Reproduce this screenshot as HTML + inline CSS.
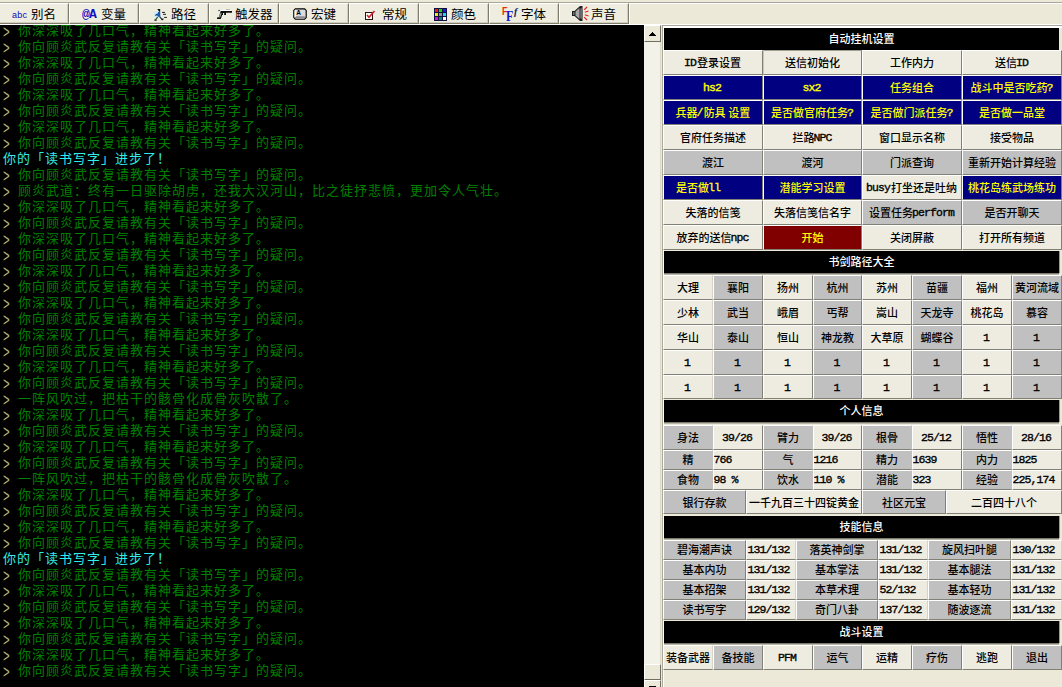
<!DOCTYPE html><html lang="zh"><head><meta charset="utf-8"><title>MUD</title><style>
*{box-sizing:border-box;margin:0;padding:0}
html,body{width:1062px;height:687px;overflow:hidden;background:#ECE9D8}
body{position:relative;font-family:"Liberation Sans","Noto Sans CJK SC",sans-serif}
.abs{position:absolute}
#tb{position:absolute;left:0;top:2px;width:1062px;height:23px;background:#ECE9D8;border-top:1px solid #A9A697;border-bottom:1px solid #fff}
#tb:before{content:"";position:absolute;left:0;top:0;width:1062px;height:1px;background:#fff}
.tbtn{position:absolute;top:0;height:21px;width:70px;background:#EFEDE0;border-top:1px solid #fff;border-left:1px solid #fff;border-right:1px solid #7F7C6B;border-bottom:1px solid #7F7C6B;box-shadow:1px 0 0 #fff, inset -1px -1px 0 #D2CFBF;font-size:12.5px;line-height:19px;color:#000;white-space:nowrap}
.tbtn .lbl{position:absolute;top:1.5px;font-family:"Liberation Sans","Noto Sans CJK SC",sans-serif;font-weight:400;letter-spacing:0}
.tbtn svg{position:absolute}
#term{position:absolute;left:0;top:25px;width:644px;height:662px;background:#000;overflow:hidden;font-family:"Liberation Mono","Noto Sans CJK SC",monospace;font-size:13px;letter-spacing:1px;font-weight:400;line-height:16px;color:#008000;white-space:pre}
#term .l{position:absolute;left:4px;height:16px;white-space:pre}
#term .l.c{left:3px}
#term .p{display:inline-block;width:14px;height:16px;color:#C0C080;font-size:14px;letter-spacing:0;font-weight:400;line-height:16px;vertical-align:top;transform:translate(-1px,1px) scale(.8,1.35);transform-origin:0 50%}
#term .c{color:#30ECEC}
#sb{position:absolute;left:644px;top:25px;width:17px;height:662px;background:#F3F2E9;border-right:1px solid #DAD7C8}
.sbb{position:absolute;left:0;width:17px;background:#ECE9D8;border-top:1px solid #fff;border-left:1px solid #fff;border-right:1px solid #716F64;border-bottom:1px solid #716F64}
#pn{position:absolute;left:662px;top:25px;width:400px;height:662px;background:#ECE9D8;border-left:1px solid #ACA899;border-top:1px solid #ACA899}
#pn:before{content:"";position:absolute;left:0;top:0;right:0;bottom:0;border-left:1px solid #fff;border-top:2px solid #fff}
.hd{position:absolute;left:664px;width:395px;height:22px;background:#000;color:#fff;font-size:11px;line-height:22px;text-align:center;font-weight:500;font-family:"Liberation Serif","Noto Sans CJK SC",sans-serif}
.e,.u{font-size:11.5px;font-family:"Liberation Mono",monospace;font-weight:400;letter-spacing:-.9px;position:relative;top:-1px;left:-1px;-webkit-text-stroke-width:.35px}
.b{position:absolute;font-size:11px;font-weight:500;text-align:center;white-space:nowrap;overflow:hidden;font-family:"Liberation Serif","Noto Sans CJK SC",sans-serif;border-top:1px solid #fff;border-left:1px solid #fff;border-right:1px solid #808074;border-bottom:1px solid #808074;color:#000}
.b.L{background:#EEECE1}
.b.G{background:#C0C0C0}
.b.N{background:#000080;color:#FFFF00}
.b.M{background:#800000;color:#FFFF00}
.hd.s{box-shadow:0 1px 0 #7E7C6F,1px 0 0 #9A988A,0 2px 0 #B9B7A8}
.b.S{border-top-color:#A3A091;border-left-color:#C9C6B6}
.b.L.F{border-right-color:#D6D3C5}
.b.G.F{border-right-color:#C0C0C0}
.b.left{text-align:left;padding-left:.5px}
</style></head><body>
<div id="tb">
<div class="tbtn" style="left:-1px"><span class="abs" style="left:12px;top:6px;color:#0808B8;font-size:9px;line-height:10px;letter-spacing:.2px;font-family:'Liberation Sans',sans-serif;">abc</span><span class="lbl" style="left:31px">别名</span></div>
<div class="tbtn" style="left:69px"><span class="abs" style="left:12px;top:4px;color:#1010C0;font-size:13px;line-height:14px;font-weight:700;letter-spacing:-.9px;font-family:'Liberation Mono',monospace;">@A</span><span class="lbl" style="left:31px">变量</span></div>
<div class="tbtn" style="left:139px"><svg style="left:13px;top:4px" width="15" height="14" viewBox="0 0 15 14"><path d="M0.5 4 L4 3 L4 9 L1 9 Z" fill="#C4ECF8" opacity=".8"/><path d="M4.3 1 L7.2 1 L7.2 3.8 L6 3.8 Z" fill="#101418"/><path d="M5.2 4 L7.2 4 L7.4 8.8 L5.6 9 L3.6 7 Z" fill="#1858B8"/><path d="M4 6.2 L2.4 7.6" stroke="#103880" stroke-width="1.2"/><path d="M4.8 8.8 L2.6 11.6" stroke="#1E6A40" stroke-width="1.3"/><path d="M6.8 8.8 L9 11.4" stroke="#183048" stroke-width="1.2"/><path d="M1.4 12.2 h2.2 M8.6 12 l1.8 -1.2" stroke="#0C0C0C" stroke-width="1.2"/><path d="M9.1 4.4 h2.8 M10.1 6.3 h2.8 M11.2 9.4 h2.7" stroke="#141414" stroke-width="1"/></svg><span class="lbl" style="left:31px">路径</span></div>
<div class="tbtn" style="left:209px"><svg style="left:6px;top:4px" width="17" height="12" viewBox="0 0 17 12"><path d="M10 1 h4 v0.8 h-4z" fill="#9C9C9C"/><path d="M4.4 1.8 h9.8 v1.2 h-9.8z" fill="#FFFFFF"/><rect x="2.5" y="1.9" width="1.2" height="1.2" fill="#181818"/><path d="M4.7 3 L16 3 L16 4.7 L10 4.7 L10 7 L8.2 7 L8.2 5 L7 5 L7 7 L6.2 7 L4.8 10.9 L1 10.9 L1 9.5 L2.8 9.3 Z" fill="#0C0C0C"/><path d="M4.6 5 L5.6 5 L4.2 9.2 L3 9.4 Z" fill="#B8B8B0"/></svg><span class="lbl" style="left:25px">触发器</span></div>
<div class="tbtn" style="left:279px"><svg style="left:13px;top:4px" width="14" height="12" viewBox="0 0 14 12"><path d="M2.4 .8 H11.6 L13.2 2.4 V9.6 L11.6 11.2 H2.4 L.8 9.6 V2.4 Z" fill="#DCDCDC" stroke="#000" stroke-width="1.15"/><path d="M2.6 8.2 h8.8 l1 1 l-1.4 1.2 h-8 l-1.4 -1.2z" fill="#8E8A8E"/><path d="M1.6 2.6 L2.8 1.6 L3.4 8 L1.6 9.6Z" fill="#F8F8F8"/><text x="5.6" y="7.2" font-size="6.5" font-weight="700" text-anchor="middle" fill="#000" font-family="Liberation Sans,sans-serif">A</text></svg><span class="lbl" style="left:31px">宏键</span></div>
<div class="tbtn" style="left:349px"><svg style="left:15px;top:3px" width="11" height="13" viewBox="0 0 11 13"><rect x="0.5" y="5.5" width="7" height="7" fill="#fff" stroke="#301010"/><path d="M2 8 L4 10.3 L9.5 4" fill="none" stroke="#D81C28" stroke-width="1.6"/></svg><span class="lbl" style="left:32px">常规</span></div>
<div class="tbtn" style="left:419px"><svg style="left:14px;top:4px" width="13" height="13" viewBox="0 0 13 13" shape-rendering="crispEdges"><rect width="13" height="13" fill="#101040"/><rect x="1" y="1" width="3" height="3" fill="#E01818"/><rect x="5" y="1" width="3" height="3" fill="#18D018"/><rect x="9" y="1" width="3" height="3" fill="#1818D8"/><rect x="1" y="5" width="3" height="3" fill="#E8E818"/><rect x="5" y="5" width="3" height="3" fill="#909090"/><rect x="9" y="5" width="3" height="3" fill="#18D8E8"/><rect x="1" y="9" width="3" height="3" fill="#D018D0"/><rect x="5" y="9" width="3" height="3" fill="#108080"/><rect x="9" y="9" width="3" height="3" fill="#FFFFFF"/></svg><span class="lbl" style="left:31px">颜色</span></div>
<div class="tbtn" style="left:489px"><span class="abs" style="left:12px;top:1px;color:#E83008;font-size:11px;line-height:12px;font-weight:700;font-family:'Liberation Sans',sans-serif;transform:scaleX(.8);transform-origin:0 0">F</span><span class="abs" style="left:16px;top:5px;color:#1018C8;font-size:14px;line-height:15px;font-weight:700;font-family:'Liberation Serif',serif;transform:scaleX(.85);transform-origin:0 0">F</span><span class="abs" style="left:24px;top:2px;color:#181850;font-size:10px;line-height:12px;font-style:italic;font-weight:700;font-family:'Liberation Serif',serif;">f</span><span class="lbl" style="left:31px">字体</span></div>
<div class="tbtn" style="left:559px"><svg style="left:12px;top:2px" width="17" height="15" viewBox="0 0 17 15"><path d="M0 5 L2.5 5 L8 0 L10.5 0 L10.5 15 L8 15 L2.5 10 L0 10Z" fill="#202020"/><path d="M3.5 5.5 L7.5 2 L7.5 13 L3.5 9.5Z" fill="#A8A8A8"/><path d="M1 6 h1.5 v3 h-1.5z" fill="#707070"/><ellipse cx="9.3" cy="7.5" rx="1.5" ry="5.6" fill="#686868"/><path d="M12.2 3.8 L15 1 M12.8 6.3 L16.5 5 M12.8 8.7 L16.5 10 M12.2 11.2 L15 14" stroke="#E02020" stroke-width="1.2"/></svg><span class="lbl" style="left:31px">声音</span></div>
</div>
<div id="term">
<div class="l" style="top:-1px"><span class="p">&gt;</span>你深深吸了几口气，精神看起来好多了。</div>
<div class="l" style="top:15px"><span class="p">&gt;</span>你向顾炎武反复请教有关「读书写字」的疑问。</div>
<div class="l" style="top:31px"><span class="p">&gt;</span>你深深吸了几口气，精神看起来好多了。</div>
<div class="l" style="top:47px"><span class="p">&gt;</span>你向顾炎武反复请教有关「读书写字」的疑问。</div>
<div class="l" style="top:63px"><span class="p">&gt;</span>你深深吸了几口气，精神看起来好多了。</div>
<div class="l" style="top:79px"><span class="p">&gt;</span>你向顾炎武反复请教有关「读书写字」的疑问。</div>
<div class="l" style="top:95px"><span class="p">&gt;</span>你深深吸了几口气，精神看起来好多了。</div>
<div class="l" style="top:111px"><span class="p">&gt;</span>你向顾炎武反复请教有关「读书写字」的疑问。</div>
<div class="l c" style="top:127px">你的「读书写字」进步了！</div>
<div class="l" style="top:143px"><span class="p">&gt;</span>你向顾炎武反复请教有关「读书写字」的疑问。</div>
<div class="l" style="top:159px"><span class="p">&gt;</span>顾炎武道：终有一日驱除胡虏，还我大汉河山，比之徒抒悲愤，更加令人气壮。</div>
<div class="l" style="top:175px"><span class="p">&gt;</span>你深深吸了几口气，精神看起来好多了。</div>
<div class="l" style="top:191px"><span class="p">&gt;</span>你向顾炎武反复请教有关「读书写字」的疑问。</div>
<div class="l" style="top:207px"><span class="p">&gt;</span>你深深吸了几口气，精神看起来好多了。</div>
<div class="l" style="top:223px"><span class="p">&gt;</span>你向顾炎武反复请教有关「读书写字」的疑问。</div>
<div class="l" style="top:239px"><span class="p">&gt;</span>你深深吸了几口气，精神看起来好多了。</div>
<div class="l" style="top:255px"><span class="p">&gt;</span>你向顾炎武反复请教有关「读书写字」的疑问。</div>
<div class="l" style="top:271px"><span class="p">&gt;</span>你深深吸了几口气，精神看起来好多了。</div>
<div class="l" style="top:287px"><span class="p">&gt;</span>你向顾炎武反复请教有关「读书写字」的疑问。</div>
<div class="l" style="top:303px"><span class="p">&gt;</span>你深深吸了几口气，精神看起来好多了。</div>
<div class="l" style="top:319px"><span class="p">&gt;</span>你向顾炎武反复请教有关「读书写字」的疑问。</div>
<div class="l" style="top:335px"><span class="p">&gt;</span>你深深吸了几口气，精神看起来好多了。</div>
<div class="l" style="top:351px"><span class="p">&gt;</span>你向顾炎武反复请教有关「读书写字」的疑问。</div>
<div class="l" style="top:367px"><span class="p">&gt;</span>一阵风吹过，把枯干的骸骨化成骨灰吹散了。</div>
<div class="l" style="top:383px"><span class="p">&gt;</span>你深深吸了几口气，精神看起来好多了。</div>
<div class="l" style="top:399px"><span class="p">&gt;</span>你向顾炎武反复请教有关「读书写字」的疑问。</div>
<div class="l" style="top:415px"><span class="p">&gt;</span>你深深吸了几口气，精神看起来好多了。</div>
<div class="l" style="top:431px"><span class="p">&gt;</span>你向顾炎武反复请教有关「读书写字」的疑问。</div>
<div class="l" style="top:447px"><span class="p">&gt;</span>一阵风吹过，把枯干的骸骨化成骨灰吹散了。</div>
<div class="l" style="top:463px"><span class="p">&gt;</span>你深深吸了几口气，精神看起来好多了。</div>
<div class="l" style="top:479px"><span class="p">&gt;</span>你向顾炎武反复请教有关「读书写字」的疑问。</div>
<div class="l" style="top:495px"><span class="p">&gt;</span>你深深吸了几口气，精神看起来好多了。</div>
<div class="l" style="top:511px"><span class="p">&gt;</span>你向顾炎武反复请教有关「读书写字」的疑问。</div>
<div class="l c" style="top:527px">你的「读书写字」进步了！</div>
<div class="l" style="top:543px"><span class="p">&gt;</span>你向顾炎武反复请教有关「读书写字」的疑问。</div>
<div class="l" style="top:559px"><span class="p">&gt;</span>你深深吸了几口气，精神看起来好多了。</div>
<div class="l" style="top:575px"><span class="p">&gt;</span>你向顾炎武反复请教有关「读书写字」的疑问。</div>
<div class="l" style="top:591px"><span class="p">&gt;</span>你深深吸了几口气，精神看起来好多了。</div>
<div class="l" style="top:607px"><span class="p">&gt;</span>你向顾炎武反复请教有关「读书写字」的疑问。</div>
<div class="l" style="top:623px"><span class="p">&gt;</span>你深深吸了几口气，精神看起来好多了。</div>
<div class="l" style="top:639px"><span class="p">&gt;</span>你向顾炎武反复请教有关「读书写字」的疑问。</div>
</div>
<div id="sb">
<div class="sbb" style="top:0;height:17px"><svg class="abs" style="left:4px;top:6px" width="7" height="4" viewBox="0 0 7 4" shape-rendering="crispEdges"><path d="M0 4 L3.5 0 L7 4Z" fill="#000"/></svg></div>
<div class="sbb" style="top:639px;height:16px"></div>
<div class="sbb" style="top:655px;height:17px"><svg class="abs" style="left:4px;top:5px" width="7" height="4" viewBox="0 0 7 4" shape-rendering="crispEdges"><path d="M0 0 L3.5 4 L7 0Z" fill="#000"/></svg></div>
</div>
<div id="pn"></div>
<div class="hd" style="top:28px">自动挂机设置</div>
<div class="b L" style="left:663px;top:50px;width:100px;height:25px;line-height:23px;padding-top:1px"><span class="u">ID</span>登录设置</div>
<div class="b L S" style="left:763px;top:50px;width:99px;height:25px;line-height:23px;padding-top:1px">送信初始化</div>
<div class="b L" style="left:862px;top:50px;width:100px;height:25px;line-height:23px;padding-top:1px">工作内力</div>
<div class="b L" style="left:962px;top:50px;width:100px;height:25px;line-height:23px;padding-top:1px">送信<span class="u">ID</span></div>
<div class="b N" style="left:663px;top:75px;width:100px;height:25px;line-height:23px;padding-top:1px"><span class="e">hs2</span></div>
<div class="b N" style="left:763px;top:75px;width:99px;height:25px;line-height:23px;padding-top:1px"><span class="e">sx2</span></div>
<div class="b N" style="left:862px;top:75px;width:100px;height:25px;line-height:23px;padding-top:1px">任务组合</div>
<div class="b N" style="left:962px;top:75px;width:100px;height:25px;line-height:23px;padding-top:1px">战斗中是否吃药<span class="e">?</span></div>
<div class="b N" style="left:663px;top:100px;width:100px;height:25px;line-height:23px;padding-top:1px">兵器<span class="e">/</span>防具 设置</div>
<div class="b N" style="left:763px;top:100px;width:99px;height:25px;line-height:23px;padding-top:1px">是否做官府任务<span class="e">?</span></div>
<div class="b N" style="left:862px;top:100px;width:100px;height:25px;line-height:23px;padding-top:1px">是否做门派任务<span class="e">?</span></div>
<div class="b N" style="left:962px;top:100px;width:100px;height:25px;line-height:23px;padding-top:1px">是否做一品堂</div>
<div class="b L" style="left:663px;top:125px;width:100px;height:25px;line-height:23px;padding-top:1px">官府任务描述</div>
<div class="b L" style="left:763px;top:125px;width:99px;height:25px;line-height:23px;padding-top:1px">拦路<span class="u">NPC</span></div>
<div class="b L" style="left:862px;top:125px;width:100px;height:25px;line-height:23px;padding-top:1px">窗口显示名称</div>
<div class="b L" style="left:962px;top:125px;width:100px;height:25px;line-height:23px;padding-top:1px">接受物品</div>
<div class="b G" style="left:663px;top:150px;width:100px;height:25px;line-height:23px;padding-top:1px">渡江</div>
<div class="b G" style="left:763px;top:150px;width:99px;height:25px;line-height:23px;padding-top:1px">渡河</div>
<div class="b G" style="left:862px;top:150px;width:100px;height:25px;line-height:23px;padding-top:1px">门派查询</div>
<div class="b G" style="left:962px;top:150px;width:100px;height:25px;line-height:23px;padding-top:1px">重新开始计算经验</div>
<div class="b N" style="left:663px;top:175px;width:100px;height:25px;line-height:23px;padding-right:29px;padding-top:1px">是否做<span class="e">ll</span></div>
<div class="b N" style="left:763px;top:175px;width:99px;height:25px;line-height:23px;padding-top:1px">潜能学习设置</div>
<div class="b L" style="left:862px;top:175px;width:100px;height:25px;line-height:23px;padding-top:1px"><span class="e">busy</span>打坐还是吐纳</div>
<div class="b N" style="left:962px;top:175px;width:100px;height:25px;line-height:23px;padding-top:1px">桃花岛练武场练功</div>
<div class="b L" style="left:663px;top:200px;width:100px;height:25px;line-height:23px;padding-top:1px">失落的信笺</div>
<div class="b L" style="left:763px;top:200px;width:99px;height:25px;line-height:23px;padding-top:1px">失落信笺信名字</div>
<div class="b G" style="left:862px;top:200px;width:100px;height:25px;line-height:23px;padding-top:1px">设置任务<span class="e">perform</span></div>
<div class="b G" style="left:962px;top:200px;width:100px;height:25px;line-height:23px;padding-top:1px">是否开聊天</div>
<div class="b L" style="left:663px;top:225px;width:100px;height:25px;line-height:23px;padding-top:1px">放弃的送信<span class="e">npc</span></div>
<div class="b M" style="left:763px;top:225px;width:99px;height:25px;line-height:23px;padding-top:1px">开始</div>
<div class="b L" style="left:862px;top:225px;width:100px;height:25px;line-height:23px;padding-top:1px">关闭屏蔽</div>
<div class="b L" style="left:962px;top:225px;width:100px;height:25px;line-height:23px;padding-top:1px">打开所有频道</div>
<div class="hd s" style="top:251px">书剑路径大全</div>
<div class="b L F" style="left:663px;top:275px;width:50px;height:25px;line-height:23px;padding-top:1px">大理</div>
<div class="b G" style="left:713px;top:275px;width:50px;height:25px;line-height:23px;padding-top:1px">襄阳</div>
<div class="b L" style="left:763px;top:275px;width:50px;height:25px;line-height:23px;padding-top:1px">扬州</div>
<div class="b G" style="left:813px;top:275px;width:49px;height:25px;line-height:23px;padding-top:1px">杭州</div>
<div class="b L" style="left:862px;top:275px;width:50px;height:25px;line-height:23px;padding-top:1px">苏州</div>
<div class="b G" style="left:912px;top:275px;width:50px;height:25px;line-height:23px;padding-top:1px">苗疆</div>
<div class="b L" style="left:962px;top:275px;width:50px;height:25px;line-height:23px;padding-top:1px">福州</div>
<div class="b G" style="left:1012px;top:275px;width:50px;height:25px;line-height:23px;padding-top:1px">黄河流域</div>
<div class="b L F" style="left:663px;top:300px;width:50px;height:25px;line-height:23px;padding-top:1px">少林</div>
<div class="b G" style="left:713px;top:300px;width:50px;height:25px;line-height:23px;padding-top:1px">武当</div>
<div class="b L" style="left:763px;top:300px;width:50px;height:25px;line-height:23px;padding-top:1px">峨眉</div>
<div class="b G" style="left:813px;top:300px;width:49px;height:25px;line-height:23px;padding-top:1px">丐帮</div>
<div class="b L" style="left:862px;top:300px;width:50px;height:25px;line-height:23px;padding-top:1px">嵩山</div>
<div class="b G" style="left:912px;top:300px;width:50px;height:25px;line-height:23px;padding-top:1px">天龙寺</div>
<div class="b L" style="left:962px;top:300px;width:50px;height:25px;line-height:23px;padding-top:1px">桃花岛</div>
<div class="b G" style="left:1012px;top:300px;width:50px;height:25px;line-height:23px;padding-top:1px">慕容</div>
<div class="b L F" style="left:663px;top:325px;width:50px;height:25px;line-height:23px;padding-top:1px">华山</div>
<div class="b G" style="left:713px;top:325px;width:50px;height:25px;line-height:23px;padding-top:1px">泰山</div>
<div class="b L" style="left:763px;top:325px;width:50px;height:25px;line-height:23px;padding-top:1px">恒山</div>
<div class="b G" style="left:813px;top:325px;width:49px;height:25px;line-height:23px;padding-top:1px">神龙教</div>
<div class="b L" style="left:862px;top:325px;width:50px;height:25px;line-height:23px;padding-top:1px">大草原</div>
<div class="b G" style="left:912px;top:325px;width:50px;height:25px;line-height:23px;padding-top:1px">蝴蝶谷</div>
<div class="b L" style="left:962px;top:325px;width:50px;height:25px;line-height:23px;padding-top:1px"><span class="e">1</span></div>
<div class="b G" style="left:1012px;top:325px;width:50px;height:25px;line-height:23px;padding-top:1px"><span class="e">1</span></div>
<div class="b L F" style="left:663px;top:350px;width:50px;height:25px;line-height:23px;padding-top:1px"><span class="e">1</span></div>
<div class="b G" style="left:713px;top:350px;width:50px;height:25px;line-height:23px;padding-top:1px"><span class="e">1</span></div>
<div class="b L" style="left:763px;top:350px;width:50px;height:25px;line-height:23px;padding-top:1px"><span class="e">1</span></div>
<div class="b G" style="left:813px;top:350px;width:49px;height:25px;line-height:23px;padding-top:1px"><span class="e">1</span></div>
<div class="b L" style="left:862px;top:350px;width:50px;height:25px;line-height:23px;padding-top:1px"><span class="e">1</span></div>
<div class="b G" style="left:912px;top:350px;width:50px;height:25px;line-height:23px;padding-top:1px"><span class="e">1</span></div>
<div class="b L" style="left:962px;top:350px;width:50px;height:25px;line-height:23px;padding-top:1px"><span class="e">1</span></div>
<div class="b G" style="left:1012px;top:350px;width:50px;height:25px;line-height:23px;padding-top:1px"><span class="e">1</span></div>
<div class="b L F" style="left:663px;top:375px;width:50px;height:24px;line-height:22px;padding-top:1px"><span class="e">1</span></div>
<div class="b G" style="left:713px;top:375px;width:50px;height:24px;line-height:22px;padding-top:1px"><span class="e">1</span></div>
<div class="b L" style="left:763px;top:375px;width:50px;height:24px;line-height:22px;padding-top:1px"><span class="e">1</span></div>
<div class="b G" style="left:813px;top:375px;width:49px;height:24px;line-height:22px;padding-top:1px"><span class="e">1</span></div>
<div class="b L" style="left:862px;top:375px;width:50px;height:24px;line-height:22px;padding-top:1px"><span class="e">1</span></div>
<div class="b G" style="left:912px;top:375px;width:50px;height:24px;line-height:22px;padding-top:1px"><span class="e">1</span></div>
<div class="b L" style="left:962px;top:375px;width:50px;height:24px;line-height:22px;padding-top:1px"><span class="e">1</span></div>
<div class="b G" style="left:1012px;top:375px;width:50px;height:24px;line-height:22px;padding-top:1px"><span class="e">1</span></div>
<div class="hd s" style="top:400px">个人信息</div>
<div class="b G F" style="left:663px;top:425px;width:50px;height:25px;line-height:23px;padding-top:1px">身法</div>
<div class="b L" style="left:713px;top:425px;width:50px;height:25px;line-height:23px;padding-top:1px"><span class="e">39/26</span></div>
<div class="b G F" style="left:763px;top:425px;width:50px;height:25px;line-height:23px;padding-top:1px">臂力</div>
<div class="b L" style="left:813px;top:425px;width:49px;height:25px;line-height:23px;padding-top:1px"><span class="e">39/26</span></div>
<div class="b G F" style="left:862px;top:425px;width:50px;height:25px;line-height:23px;padding-top:1px">根骨</div>
<div class="b L" style="left:912px;top:425px;width:50px;height:25px;line-height:23px;padding-top:1px"><span class="e">25/12</span></div>
<div class="b G F" style="left:962px;top:425px;width:50px;height:25px;line-height:23px;padding-top:1px">悟性</div>
<div class="b L" style="left:1012px;top:425px;width:50px;height:25px;line-height:23px;padding-top:1px"><span class="e">28/16</span></div>
<div class="b G F" style="left:663px;top:450px;width:50px;height:20px;line-height:18px">精</div>
<div class="b L left" style="left:713px;top:450px;width:50px;height:20px;line-height:18px"><span class="e">766</span></div>
<div class="b G F" style="left:763px;top:450px;width:50px;height:20px;line-height:18px">气</div>
<div class="b L left" style="left:813px;top:450px;width:49px;height:20px;line-height:18px"><span class="e">1216</span></div>
<div class="b G F" style="left:862px;top:450px;width:50px;height:20px;line-height:18px">精力</div>
<div class="b L left" style="left:912px;top:450px;width:50px;height:20px;line-height:18px"><span class="e">1639</span></div>
<div class="b G F" style="left:962px;top:450px;width:50px;height:20px;line-height:18px">内力</div>
<div class="b L left" style="left:1012px;top:450px;width:50px;height:20px;line-height:18px"><span class="e">1825</span></div>
<div class="b G F" style="left:663px;top:470px;width:50px;height:20px;line-height:18px">食物</div>
<div class="b L left" style="left:713px;top:470px;width:50px;height:20px;line-height:18px"><span class="e">98 %</span></div>
<div class="b G F" style="left:763px;top:470px;width:50px;height:20px;line-height:18px">饮水</div>
<div class="b L left" style="left:813px;top:470px;width:49px;height:20px;line-height:18px"><span class="e">110 %</span></div>
<div class="b G F" style="left:862px;top:470px;width:50px;height:20px;line-height:18px">潜能</div>
<div class="b L left" style="left:912px;top:470px;width:50px;height:20px;line-height:18px"><span class="e">323</span></div>
<div class="b G F" style="left:962px;top:470px;width:50px;height:20px;line-height:18px">经验</div>
<div class="b L left" style="left:1012px;top:470px;width:50px;height:20px;line-height:18px"><span class="e">225,174</span></div>
<div class="b G" style="left:663px;top:490px;width:83px;height:24px;line-height:22px;padding-top:1px">银行存款</div>
<div class="b L" style="left:746px;top:490px;width:116px;height:24px;line-height:22px;padding-top:1px">一千九百三十四锭黄金</div>
<div class="b G" style="left:862px;top:490px;width:84px;height:24px;line-height:22px;padding-top:1px">社区元宝</div>
<div class="b L" style="left:946px;top:490px;width:116px;height:24px;line-height:22px;padding-top:1px">二百四十八个</div>
<div class="hd s" style="top:516px">技能信息</div>
<div class="b G" style="left:663px;top:540px;width:83px;height:20px;line-height:18px">碧海潮声诀</div>
<div class="b L left F" style="left:746px;top:540px;width:50px;height:20px;line-height:18px;padding-left:1.5px"><span class="e">131/132</span></div>
<div class="b G" style="left:796px;top:540px;width:82px;height:20px;line-height:18px">落英神剑掌</div>
<div class="b L left F" style="left:878px;top:540px;width:50px;height:20px;line-height:18px;padding-left:1.5px"><span class="e">131/132</span></div>
<div class="b G" style="left:928px;top:540px;width:83px;height:20px;line-height:18px">旋风扫叶腿</div>
<div class="b L left F" style="left:1011px;top:540px;width:51px;height:20px;line-height:18px;padding-left:1.5px"><span class="e">130/132</span></div>
<div class="b G" style="left:663px;top:560px;width:83px;height:20px;line-height:18px">基本内功</div>
<div class="b L left F" style="left:746px;top:560px;width:50px;height:20px;line-height:18px;padding-left:1.5px"><span class="e">131/132</span></div>
<div class="b G" style="left:796px;top:560px;width:82px;height:20px;line-height:18px">基本掌法</div>
<div class="b L left F" style="left:878px;top:560px;width:50px;height:20px;line-height:18px;padding-left:1.5px"><span class="e">131/132</span></div>
<div class="b G" style="left:928px;top:560px;width:83px;height:20px;line-height:18px">基本腿法</div>
<div class="b L left F" style="left:1011px;top:560px;width:51px;height:20px;line-height:18px;padding-left:1.5px"><span class="e">131/132</span></div>
<div class="b G" style="left:663px;top:580px;width:83px;height:20px;line-height:18px">基本招架</div>
<div class="b L left F" style="left:746px;top:580px;width:50px;height:20px;line-height:18px;padding-left:1.5px"><span class="e">131/132</span></div>
<div class="b G" style="left:796px;top:580px;width:82px;height:20px;line-height:18px">本草术理</div>
<div class="b L left F" style="left:878px;top:580px;width:50px;height:20px;line-height:18px;padding-left:1.5px"><span class="e">52/132</span></div>
<div class="b G" style="left:928px;top:580px;width:83px;height:20px;line-height:18px">基本轻功</div>
<div class="b L left F" style="left:1011px;top:580px;width:51px;height:20px;line-height:18px;padding-left:1.5px"><span class="e">131/132</span></div>
<div class="b G" style="left:663px;top:600px;width:83px;height:20px;line-height:18px">读书写字</div>
<div class="b L left F" style="left:746px;top:600px;width:50px;height:20px;line-height:18px;padding-left:1.5px"><span class="e">129/132</span></div>
<div class="b G" style="left:796px;top:600px;width:82px;height:20px;line-height:18px">奇门八卦</div>
<div class="b L left F" style="left:878px;top:600px;width:50px;height:20px;line-height:18px;padding-left:1.5px"><span class="e">137/132</span></div>
<div class="b G" style="left:928px;top:600px;width:83px;height:20px;line-height:18px">随波逐流</div>
<div class="b L left F" style="left:1011px;top:600px;width:51px;height:20px;line-height:18px;padding-left:1.5px"><span class="e">131/132</span></div>
<div class="hd s" style="top:621px">战斗设置</div>
<div class="b L F" style="left:663px;top:645px;width:50px;height:25px;line-height:23px;padding-top:1px">装备武器</div>
<div class="b G" style="left:713px;top:645px;width:50px;height:25px;line-height:23px;padding-top:1px">备技能</div>
<div class="b L" style="left:763px;top:645px;width:50px;height:25px;line-height:23px;padding-top:1px"><span class="u">PFM</span></div>
<div class="b G" style="left:813px;top:645px;width:49px;height:25px;line-height:23px;padding-top:1px">运气</div>
<div class="b L" style="left:862px;top:645px;width:50px;height:25px;line-height:23px;padding-top:1px">运精</div>
<div class="b G" style="left:912px;top:645px;width:50px;height:25px;line-height:23px;padding-top:1px">疗伤</div>
<div class="b L" style="left:962px;top:645px;width:50px;height:25px;line-height:23px;padding-top:1px">逃跑</div>
<div class="b G" style="left:1012px;top:645px;width:50px;height:25px;line-height:23px;padding-top:1px">退出</div>
</body></html>
